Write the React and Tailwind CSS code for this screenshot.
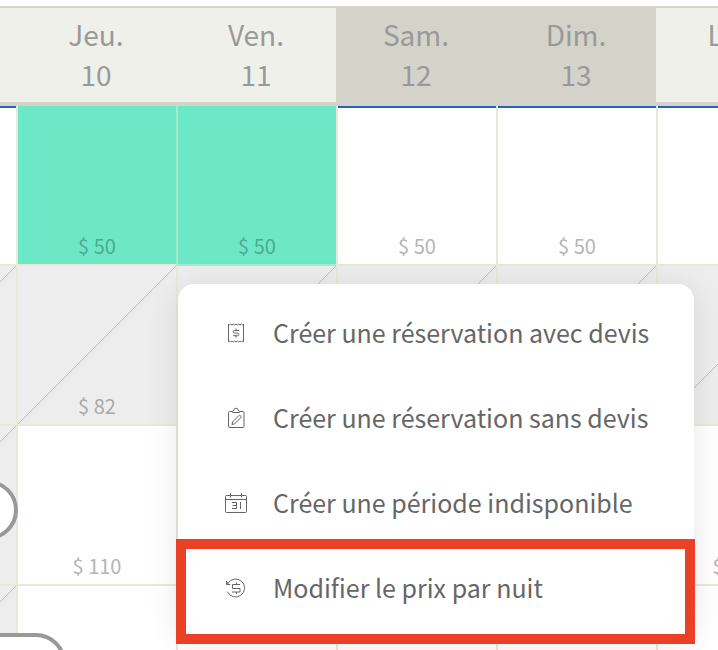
import React from 'react';
import clsx from 'clsx';

const days = [
    { number: 9 },
    { name: 'Jeu.', number: 10 },
    { name: 'Ven.', number: 11 },
    { name: 'Sam.', number: 12, weekend: true },
    { name: 'Dim.', number: 13, weekend: true },
    { name: 'Lun.', number: 14 },
];

// status: open | selected | closed | free
const rows = [
    {
        cells: ['open', 'selected', 'selected', 'open', 'open', 'open'],
        prices: [null, 50, 50, 50, 50, null],
    },
    {
        cells: ['closed', 'closed', 'closed', 'closed', 'closed', 'closed'],
        prices: [null, 82, null, null, null, null],
    },
    {
        cells: ['closed', 'free', 'free', 'free', 'free', 'free'],
        prices: [null, 110, null, null, null, 110],
        booking: 'first',
    },
    {
        cells: ['closed', 'free', 'free', 'free', 'free', 'free'],
        prices: [],
        booking: 'second',
    },
];

const iconProps = {
    width: 24,
    height: 24,
    viewBox: '0 0 24 24',
    fill: 'none',
    stroke: 'currentColor',
    strokeWidth: 1,
    'aria-hidden': true,
};

const ReceiptIcon = () => (
    <svg {...iconProps}>
        <path d="M4.5 3v18M19.5 3v18" />
        <path d="M4 3l1.3 1 1.3-1 1.4 1 1.3-1 1.4 1L12 3l1.3 1 1.4-1L16 4l1.4-1 1.3 1L20 3M4 21l1.3-1 1.3 1L8 20l1.3 1 1.4-1 1.3 1 1.3-1 1.4 1 1.3-1 1.4 1 1.3-1 1.3 1" />
        <path d="M15 9.500h-4.500a1.300 1.300 0 0 0 0 2.600h3a1.300 1.300 0 0 1 0 2.600H9M12 7.500v2M12 14.700v2" />
    </svg>
);

const ClipboardIcon = () => (
    <svg {...iconProps}>
        <path d="M8 5.500H5.500a1 1 0 0 0-1 1V20a1.500 1.500 0 0 0 1.500 1.500h13a1 1 0 0 0 1-1V6.500a1 1 0 0 0-1-1H16" />
        <path d="M8.500 6.500V5.500a1.500 1.500 0 0 1 1.500-1.300 2 2 0 0 1 4 0 1.500 1.500 0 0 1 1.500 1.300v1z" />
        <path d="M8 18.500l.7-2.700 6-6a1.300 1.300 0 0 1 2 2l-6 6z" />
    </svg>
);

const CalendarIcon = () => (
    <svg {...iconProps}>
        <rect x="1.500" y="4.500" width="21" height="17" rx="1" />
        <path d="M1.500 8.500h21M6.500 2.500v4M17.500 2.500v4" />
        <path d="M8 11.500h4.500v6H8M8.500 14.500h4M16.500 11v7" />
    </svg>
);

const PriceIcon = () => (
    <svg {...iconProps}>
        <path d="M3.800 7.500a9 9 0 1 1-.4 8.200" />
        <path d="M2.500 5v3.500h3.800M2.700 5.500l1.500 2.700" />
        <path d="M16 8.500H8.500v4h7.500v3.500H8M12.500 6.500v2M12.500 16v2" />
    </svg>
);

const menuItems = [
    { label: 'Créer une réservation avec devis', Icon: ReceiptIcon },
    { label: 'Créer une réservation sans devis', Icon: ClipboardIcon },
    { label: 'Créer une période indisponible', Icon: CalendarIcon },
    { label: 'Modifier le prix par nuit', Icon: PriceIcon, highlighted: true },
];

const DayCell = ({ status, price, booking, afterSelected }) => (
    <td
        className={clsx(
            'relative border-l-2 border-b-2 p-0',
            status === 'selected' && 'bg-[#6de8c7]',
            status === 'closed' && 'bg-[#ededed]',
            afterSelected ? 'border-[#a4ebd2]' : 'border-[#e8e9da]'
        )}
    >
        {status === 'closed' && (
            <svg className="absolute inset-0 h-full w-full" viewBox="0 0 158 158" preserveAspectRatio="none" aria-hidden="true">
                <line x1="0" y1="158" x2="158" y2="0" stroke="#bcbcbc" strokeWidth="1" />
            </svg>
        )}
        <div
            className={clsx(
                'flex h-[158px] items-end justify-center text-xl leading-9',
                status === 'open' && 'border-t-2 border-[#2760c5]',
                status === 'selected' && 'text-[#4fa890]',
                status === 'closed' && 'text-[#a9a9a9]',
                (status === 'open' || status === 'free') && 'text-[#b4b4b4]'
            )}
        >
            {price && <span>$ {price}</span>}
        </div>
        {booking === 'first' && (
            <div className="absolute right-[-2px] top-[54px] z-10 h-[60px] w-36 rounded-full border-4 border-[#999999] bg-white" />
        )}
        {booking === 'second' && (
            <div className="absolute right-[-50px] top-[47px] z-10 h-[60px] w-48 rounded-full border-4 border-[#999999] bg-white" />
        )}
    </td>
);

const Calendar = () => (
    <table className="-ml-36 mt-1.5 w-[960px] table-fixed border-separate border-spacing-0">
        <thead>
            <tr>
                {days.map((day) => (
                    <th
                        key={day.number}
                        className={clsx(
                            'h-[100px] border-t-2 border-b-4 border-[#d3d3c9] px-0 pt-0 pb-0.5 text-[28px] leading-10 font-normal text-[#999999]',
                            day.weekend ? 'bg-[#d3d3c9]' : 'bg-[#f0f0eb]'
                        )}
                    >
                        {day.name && (
                            <>
                                <div>{day.name}</div>
                                <div>{day.number}</div>
                            </>
                        )}
                    </th>
                ))}
            </tr>
        </thead>
        <tbody>
            {rows.map((row, i) => (
                <tr key={i}>
                    {row.cells.map((status, j) => (
                        <DayCell
                            key={j}
                            status={status}
                            price={row.prices[j]}
                            booking={j === 0 ? row.booking : undefined}
                            afterSelected={status === 'selected' && row.cells[j - 1] === 'selected'}
                        />
                    ))}
                </tr>
            ))}
        </tbody>
    </table>
);

const ContextMenu = () => (
    <ul className="absolute top-[284px] left-[178px] z-20 w-[516px] rounded-2xl bg-white pt-1.5 pb-2 shadow-[0_4px_32px_rgba(0,0,0,0.1)]">
        {menuItems.map(({ label, Icon, highlighted }) => (
            <li key={label} className="relative">
                <button type="button" className="flex h-[85px] w-full items-center gap-[25px] pl-[46px] text-left text-[25px] text-[#666666]">
                    <Icon />
                    <span>{label}</span>
                </button>
                {highlighted && (
                    <div className="pointer-events-none absolute -top-1.5 -right-px -bottom-3.5 -left-0.5 border-10 border-[#ea4025]" />
                )}
            </li>
        ))}
    </ul>
);

const App = () => {
    return (
        <main className="relative h-screen overflow-hidden bg-white font-['Noto_Sans_CJK_SC','Noto_Sans',sans-serif]">
            <Calendar />
            <ContextMenu />
        </main>
    );
};

export default App;
